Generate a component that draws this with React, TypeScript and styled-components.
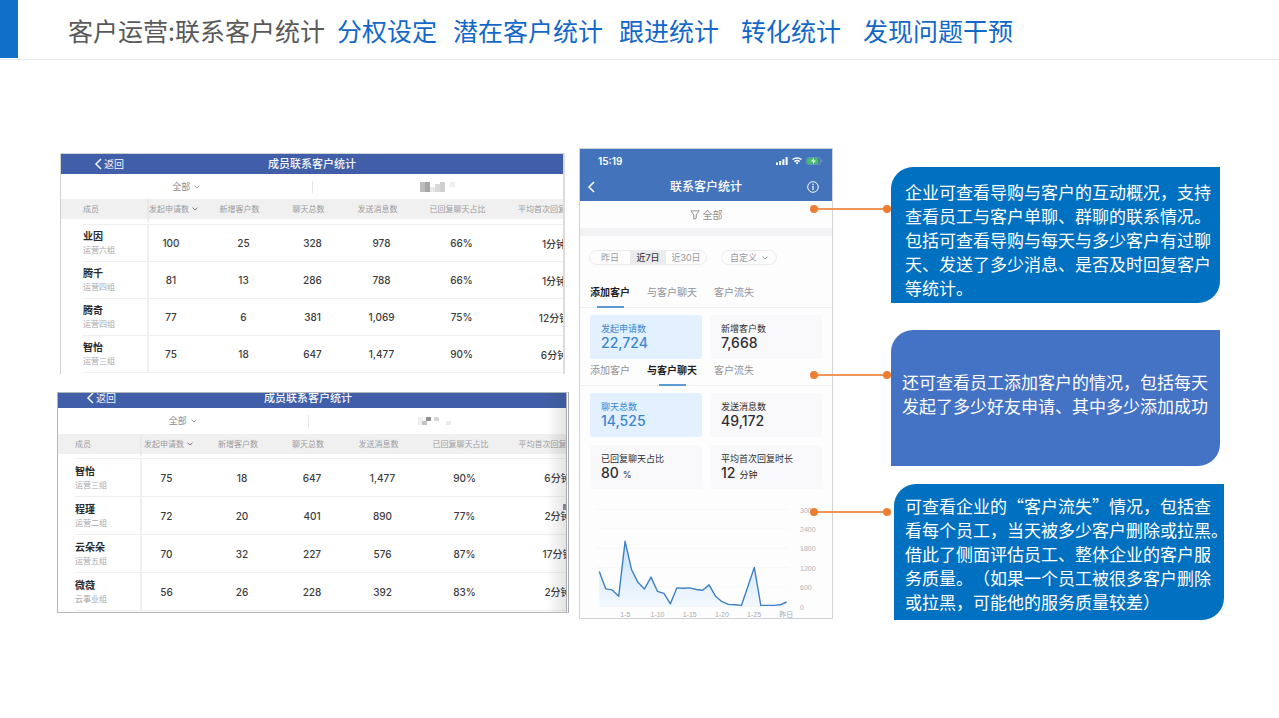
import React from "react";
import styled, { createGlobalStyle } from "styled-components";

const CJK = `"Noto Sans CJK SC", sans-serif`;

const GlobalStyle = createGlobalStyle`
  * { box-sizing: border-box; }
  body {
    margin: 0;
    background: #fff;
    font-family: Inter, ${CJK};
    text-spacing-trim: space-all;
  }
  h1, h2, p, ul { margin: 0; padding: 0; }
  button, select {
    margin: 0;
    padding: 0;
    border: 0;
    background: none;
    color: inherit;
    font: inherit;
    white-space: nowrap;
    appearance: none;
    cursor: pointer;
  }
  svg { display: block; flex: none; }
`;

/* ---------- page header ---------- */

const Header = styled.header`
  display: flex;
  height: 60px;
  border-bottom: 1px solid #e9e9e9;
`;

const Accent = styled.div`
  width: 18px;
  height: 58px;
  background: #1070c9;
`;

const Heading = styled.h1`
  display: flex;
  align-items: center;
  padding-left: 50px;
  height: 59px;
  color: #595959;
  font: 400 25px/36px ${CJK};
  white-space: nowrap;
`;

const Topic = styled.span<{ $gap: number }>`
  margin-left: ${(p) => p.$gap}px;
  color: #1268c8;
`;

const Main = styled.main`
  display: grid;
  grid-template-columns: minmax(0, 512fr) minmax(0, 264fr) minmax(0, 391fr);
  align-items: start;
  padding: 88px 55px 40px 57px;
`;

/* ---------- member tables ---------- */

const Tables = styled.div`
  display: flex;
  flex-direction: column;
  gap: 18px;
  padding-top: 5px;
`;

const Panel = styled.section<{ $framed?: boolean }>`
  position: relative;
  overflow: hidden;
  padding-bottom: 1px;
  border: 1px solid ${(p) => (p.$framed ? "#b5b7bb" : "#cfd1d6")};
  background: #fff;
  ${(p) =>
    p.$framed
      ? "border-right: 3px double #a9acb3;"
      : "margin: 0 4px 0 3px; border-right: 2px solid #dcdcdc; border-bottom: 0;"}
`;

const EdgeShade = styled.div`
  position: absolute;
  inset: 0 0 0 auto;
  width: 20px;
  background: linear-gradient(to right, rgba(60, 60, 70, 0), rgba(60, 60, 70, 0.14));
`;

const Handle = styled.div`
  position: absolute;
  top: 111px;
  right: 0;
  width: 3px;
  height: 6px;
  background: #81858f;
`;

const Bar = styled.div<{ $height: number; $inset: number }>`
  display: grid;
  grid-template-columns: 1fr auto 1fr;
  align-content: end;
  height: ${(p) => p.$height}px;
  padding-right: ${(p) => p.$inset}px;
  background: #405fa8;
  color: #f3f6fc;
`;

const Back = styled.button<{ $start: number }>`
  display: flex;
  align-items: center;
  gap: 2px;
  height: 20px;
  padding-left: ${(p) => p.$start}px;
  font-size: 10px;
  line-height: 20px;
`;

const BarTitle = styled.h2`
  font-size: 11px;
  font-weight: 500;
  line-height: 20px;
`;

const Filters = styled.div<{ $height: number; $inset: number }>`
  display: flex;
  align-items: center;
  height: ${(p) => p.$height}px;
  padding-right: ${(p) => p.$inset}px;
`;

const FilterHalf = styled.div`
  flex: 1;
  display: flex;
  justify-content: center;
  color: #8d8d8d;
  & + & { border-left: 1px solid #e4e4e4; height: 12px; align-items: center; }
`;

const Picker = styled.label`
  display: flex;
  align-items: center;
  gap: 3px;
  select { font-size: 9px; line-height: 14px; }
`;

const Grid = styled.table`
  table-layout: fixed;
  width: 540px;
  border-spacing: 0;
`;

const HeadCell = styled.th<{ $gap: number; $start?: number; $divider?: boolean }>`
  height: ${(p) => 20 + p.$gap}px;
  padding: 0 ${(p) => (p.$start === undefined ? 8 : 0)}px 0 ${(p) => p.$start ?? 0}px;
  border-bottom: ${(p) => p.$gap}px solid #fff;
  background: #f0f0f0;
  background-clip: padding-box;
  color: #9b9ba0;
  font-size: 8px;
  font-weight: 400;
  line-height: 12px;
  text-align: ${(p) => (p.$start === undefined ? "center" : "left")};
  white-space: nowrap;
  ${(p) => p.$divider && "border-right: 2px solid #e8e8e8;"}
`;

const Sort = styled.button`
  display: flex;
  align-items: center;
  gap: 3px;
`;

const Cell = styled.td<{ $before: number; $after: number; $first: boolean }>`
  padding: 0 ${(p) => p.$after}px 0 ${(p) => p.$before}px;
  border-top: ${(p) => (p.$first ? "1px solid #efeff1" : "0")};
  border-bottom: 1px solid #efeff1;
  color: #3c3c3e;
  font-size: 10px;
  font-weight: 500;
  text-align: center;
  white-space: nowrap;
`;

const MemberCell = styled.td<{ $start: number }>`
  padding: 0 0 0 ${(p) => p.$start}px;
  border-right: 2px solid #f0f0f1;
`;

const Member = styled.div<{ $height: number; $first: boolean }>`
  display: flex;
  flex-direction: column;
  justify-content: center;
  height: ${(p) => p.$height + (p.$first ? 1 : 0)}px;
  border-top: ${(p) => (p.$first ? "1px solid #efeff1" : "0")};
  border-bottom: 1px solid #efeff1;
  strong { color: #2b2b2d; font-size: 10px; font-weight: 700; line-height: 14px; }
  span { color: #a9a9ae; font-size: 8px; line-height: 14px; }
`;

type Row = [string, string, string, string, string, string, string, string];

const Chevron = ({ color = "#9a9a9a" }: { color?: string }) => (
  <svg width="6" height="4" viewBox="0 0 6 4" fill="none" stroke={color}>
    <path d="M.5.7 3 3 5.5.7" />
  </svg>
);

const BackArrow = () => (
  <svg width="8" height="12" viewBox="0 0 8 12" fill="none" stroke="currentColor" strokeWidth="1.5">
    <path d="M7 1 2 6l5 5" />
  </svg>
);

type Tile = [number, number, number, string];

const Mosaic = ({ tiles }: { tiles: Tile[] }) => (
  <svg width="36" height="10" viewBox="0 0 36 10" aria-hidden="true">
    {tiles.map(([x, y, size, fill], i) => (
      <rect key={i} x={x} y={y} width="5" height={size} fill={fill} />
    ))}
  </svg>
);

interface MemberPanelProps {
  framed?: boolean;
  rows: Row[];
  columns: number[];
  tiles: Tile[];
}

function MemberPanel({ framed, rows, columns, tiles }: MemberPanelProps) {
  const gap = framed ? 4 : 5;
  const inset = framed ? 8 : 0;
  const heads = ["新增客户数", "聊天总数", "发送消息数", "已回复聊天占比", "平均首次回复时长"];
  return (
    <Panel $framed={framed}>
      <Bar $height={framed ? 15 : 20} $inset={inset}>
        <Back $start={framed ? 28 : 33}>
          <BackArrow />
          返回
        </Back>
        <BarTitle>成员联系客户统计</BarTitle>
      </Bar>
      <Filters $height={framed ? 26 : 25} $inset={inset}>
        <FilterHalf>
          <Picker>
            <select aria-label="成员范围">
              <option>全部</option>
            </select>
            <Chevron />
          </Picker>
        </FilterHalf>
        <FilterHalf>
          <Mosaic tiles={tiles} />
        </FilterHalf>
      </Filters>
      <Grid>
        <colgroup>
          {columns.map((w, i) => (
            <col key={i} width={w} />
          ))}
        </colgroup>
        <thead>
          <tr>
            <HeadCell $gap={gap} $start={framed ? 17 : 22} $divider>成员</HeadCell>
            <HeadCell $gap={gap} $start={framed ? 2 : 0}>
              <Sort>
                发起申请数
                <Chevron color="#77777c" />
              </Sort>
            </HeadCell>
            {heads.map((h) => (
              <HeadCell key={h} $gap={gap}>{h}</HeadCell>
            ))}
          </tr>
        </thead>
        <tbody>
          {rows.map(([name, team, ...values], r) => (
            <tr key={name}>
              <MemberCell $start={framed ? 17 : 22}>
                <Member $height={framed ? 38 : 37} $first={r === 0}>
                  <strong>{name}</strong>
                  <span>{team}</span>
                </Member>
              </MemberCell>
              {values.map((v, i) => (
                <Cell
                  key={i}
                  $first={r === 0}
                  $after={i === 0 ? 16 : 0}
                  $before={framed && i === 5 ? 6 : 0}
                >
                  {v}
                </Cell>
              ))}
            </tr>
          ))}
        </tbody>
      </Grid>
      {framed && <EdgeShade />}
      {framed && <Handle />}
    </Panel>
  );
}

/* ---------- phone ---------- */

const Phone = styled.section`
  margin-left: 10px;
  border: 1px solid #d3d3d6;
  background: #fefdfe;
`;

const PhoneTop = styled.div`
  background: #4374bb;
  color: #fff;
`;

const Status = styled.div`
  display: flex;
  align-items: center;
  gap: 4px;
  height: 24px;
  padding: 0 9px 0 18px;
  font-size: 10px;
  font-weight: 600;
  time { margin-right: auto; }
`;

const Nav = styled.div`
  display: grid;
  grid-template-columns: 1fr auto 1fr;
  align-items: center;
  height: 28px;
  h2 { font-size: 12px; font-weight: 500; line-height: 18px; }
`;

const NavButton = styled.button<{ $end?: boolean }>`
  justify-self: ${(p) => (p.$end ? "end" : "start")};
  padding: ${(p) => (p.$end ? "0 13px 0 0" : "0 0 0 7px")};
`;

const ScopeButton = styled.button`
  display: flex;
  align-items: center;
  justify-content: center;
  gap: 3px;
  width: 100%;
  height: 27px;
  color: #8f8f93;
  font-size: 10px;
`;

const Band = styled.div`
  height: 8px;
  background: #f3f2f5;
`;

const Ranges = styled.div`
  display: flex;
  gap: 14px;
  padding: 14px 9px 0;
`;

const Pill = styled.div`
  display: flex;
  align-items: center;
  height: 15px;
  border: 1px solid #ebebed;
  border-radius: 8px;
  overflow: hidden;
  color: #98989d;
  font-size: 9px;
  line-height: 13px;
`;

const Range = styled.button<{ $active?: boolean }>`
  flex: none;
  width: 40px;
  height: 13px;
  ${(p) => p.$active && "width: 36px; background: #ebebed; color: #3a3a48; font-weight: 500;"}
`;

const CustomRange = styled(Picker)`
  padding: 0 8px;
  gap: 4px;
`;

const Tabs = styled.div<{ $top: number }>`
  display: flex;
  gap: 17px;
  margin-top: ${(p) => p.$top}px;
  padding: 0 10px;
  box-shadow: inset 0 -1px #f0f0f2;
`;

const Tab = styled.button<{ $active: boolean }>`
  height: 23px;
  color: ${(p) => (p.$active ? "#1f1f22" : "#939398")};
  font-size: 10px;
  font-weight: ${(p) => (p.$active ? 700 : 400)};
  line-height: 14px;
  &::after {
    content: "";
    display: block;
    width: 27px;
    height: 2px;
    margin: 7px auto 0;
    background: ${(p) => (p.$active ? "#5b9ad3" : "transparent")};
  }
`;

const Cards = styled.div`
  display: grid;
  grid-template-columns: 1fr 1fr;
  gap: 8px;
  padding: 7px 10px 0;
`;

const Card = styled.div<{ $active?: boolean }>`
  height: 44px;
  padding: 8px 11px;
  border-radius: 2px;
  background: ${(p) => (p.$active ? "#e3f0ff" : "#f9f8fb")};
  color: ${(p) => (p.$active ? "#3a86d2" : "#2e2e31")};
`;

const CardLabel = styled.p`
  font-size: 9px;
  line-height: 12px;
  white-space: nowrap;
`;

const CardValue = styled.p`
  font-size: 14px;
  font-weight: 500;
  line-height: 16px;
  small { margin-left: 4px; font-size: 9px; font-weight: 400; }
`;

const ChartArt = styled.svg`
  width: 100%;
  height: auto;
  font-family: "Liberation Sans", ${CJK};
`;

const TAB_NAMES = ["添加客户", "与客户聊天", "客户流失"];

function TabRow({ active, top }: { active: number; top: number }) {
  return (
    <Tabs $top={top} role="tablist">
      {TAB_NAMES.map((t, i) => (
        <Tab key={t} role="tab" aria-selected={i === active} $active={i === active}>
          {t}
        </Tab>
      ))}
    </Tabs>
  );
}

const SERIES = [
  1090, 550, 520, 320, 2020, 1140, 745, 550, 915, 475, 415, 90, 580, 570, 580, 530, 510, 675, 320,
  155, 70, 60, 40, 620, 1215, 40, 40, 40, 60, 145,
];

function Chart() {
  const points = SERIES.map((v, i) => `${(19.3 + i * 6.46).toFixed(1)},${(117.7 - v / 30.9).toFixed(1)}`);
  const ticks = [3000, 2400, 1800, 1200, 600, 0];
  const days = ["1-5", "1-10", "1-15", "1-20", "1-25", "昨日"];
  return (
    <ChartArt viewBox="0 0 252 129" role="img" aria-label="聊天总数趋势">
      <defs>
        <linearGradient id="area" x1="0" y1="0" x2="0" y2="1">
          <stop offset="0" stopColor="#c9e2fa" />
          <stop offset="1" stopColor="#f2f8fe" />
        </linearGradient>
      </defs>
      {ticks.map((t, i) => (
        <g key={t}>
          <path d={`M16.5 ${20.5 + i * 19.4}H208.5`} stroke="#f7f7f9" />
          <text x="220" y={23.5 + i * 19.4} fontSize="7" fill="#b0b0b4">
            {t}
          </text>
        </g>
      ))}
      <polygon points={`19.3,117.7 ${points.join(" ")} 206.6,117.7`} fill="url(#area)" />
      <polyline points={points.join(" ")} fill="none" stroke="#3c80c8" strokeWidth="1.4" strokeLinejoin="round" />
      {days.map((d, i) => (
        <text key={d} x={45.3 + i * 32.2} y="128" fontSize="7" fill="#a9a9ad" textAnchor="middle">
          {d}
        </text>
      ))}
    </ChartArt>
  );
}

function PhonePanel() {
  return (
    <Phone>
      <PhoneTop>
        <Status>
          <time>15:19</time>
          <svg width="12" height="8" viewBox="0 0 12 8" fill="#fff">
            <path d="M0 5.5h2V8H0zM3.2 4h2v4h-2zM6.4 2.2h2V8h-2zM9.6 0h2v8h-2z" />
          </svg>
          <svg width="10" height="8" viewBox="0 0 10 8" fill="none" stroke="#fff" strokeWidth="1.4">
            <path d="M.6 2.6C3 .4 7 .4 9.4 2.6M2.3 4.6c1.5-1.3 3.9-1.3 5.4 0" />
            <path d="M3.6 5.8a2 2 0 0 1 2.8 0L5 7.4z" fill="#fff" stroke="none" />
          </svg>
          <svg width="17" height="8" viewBox="0 0 17 8">
            <rect x=".5" y=".5" width="14" height="7" rx="2" fill="none" stroke="#6c95bd" />
            <rect x="1.3" y="1.3" width="11" height="5.4" rx="1.2" fill="#43c463" />
            <path d="M8 .8 5 4.4h2.2L6.8 7.2l3-3.6H7.6z" fill="#fff" />
            <path d="M15.6 2.8v2.4c1-.3 1-2.1 0-2.4z" fill="#86a9c9" />
          </svg>
        </Status>
        <Nav>
          <NavButton aria-label="返回"><BackArrow /></NavButton>
          <h2>联系客户统计</h2>
          <NavButton $end aria-label="说明">
            <svg width="12" height="12" viewBox="0 0 12 12" fill="none" stroke="#fff">
              <circle cx="6" cy="6" r="5.3" />
              <path d="M6 2.8v1.4M6 5v4" strokeWidth="1.2" />
            </svg>
          </NavButton>
        </Nav>
      </PhoneTop>
      <ScopeButton>
        <svg width="10" height="10" viewBox="0 0 10 10" fill="none" stroke="#949498">
          <path d="M.8.8h8.4L6.2 5v3.2L3.8 9.3V5z" />
        </svg>
        全部
      </ScopeButton>
      <Band />
      <Ranges>
        <Pill>
          <Range>昨日</Range>
          <Range $active>近7日</Range>
          <Range>近30日</Range>
        </Pill>
        <Pill>
          <CustomRange>
            <select aria-label="日期范围">
              <option>自定义</option>
            </select>
            <Chevron />
          </CustomRange>
        </Pill>
      </Ranges>
      <TabRow active={0} top={20} />
      <Cards>
        <Card $active>
          <CardLabel>发起申请数</CardLabel>
          <CardValue>22,724</CardValue>
        </Card>
        <Card>
          <CardLabel>新增客户数</CardLabel>
          <CardValue>7,668</CardValue>
        </Card>
      </Cards>
      <TabRow active={1} top={4} />
      <Cards>
        <Card $active>
          <CardLabel>聊天总数</CardLabel>
          <CardValue>14,525</CardValue>
        </Card>
        <Card>
          <CardLabel>发送消息数</CardLabel>
          <CardValue>49,172</CardValue>
        </Card>
        <Card>
          <CardLabel>已回复聊天占比</CardLabel>
          <CardValue>80<small>%</small></CardValue>
        </Card>
        <Card>
          <CardLabel>平均首次回复时长</CardLabel>
          <CardValue>12<small>分钟</small></CardValue>
        </Card>
      </Cards>
      <Chart />
    </Phone>
  );
}

/* ---------- callouts ---------- */

const Callouts = styled.ul`
  margin-left: 58px;
  padding-top: 19px;
  list-style: none;
`;

const Callout = styled.li<{ $tone: string; $top: number; $pad: string; $shift?: boolean }>`
  position: relative;
  min-height: 136px;
  margin: ${(p) => p.$top}px ${(p) => (p.$shift ? 0 : 4)}px 0 ${(p) => (p.$shift ? 3 : 0)}px;
  padding: ${(p) => p.$pad};
  border-radius: 22px 0 22px 0;
  background: ${(p) => p.$tone};
  color: #fff;
  font: 400 17px/24px ${CJK};
  white-space: pre;
`;

const Connector = styled.svg<{ $x: number; $y: number }>`
  position: absolute;
  left: ${(p) => -p.$x}px;
  top: ${(p) => p.$y}px;
`;

const Link = ({ x, y }: { x: number; y: number }) => (
  <Connector $x={x} $y={y} width="81" height="8" viewBox="0 0 81 8" fill="#ed7d31" aria-hidden="true">
    <path d="M4 4h73" stroke="#f0955a" strokeWidth="2" />
    <circle cx="4" cy="4" r="4" />
    <circle cx="77" cy="4" r="4" />
  </Connector>
);

/* ---------- data ---------- */

const FIRST: Row[] = [
  ["业因", "运营六组", "100", "25", "328", "978", "66%", "1分钟"],
  ["腾千", "运营四组", "81", "13", "286", "788", "66%", "1分钟"],
  ["腾奇", "运营四组", "77", "6", "381", "1,069", "75%", "12分钟"],
  ["智怡", "运营三组", "75", "18", "647", "1,477", "90%", "6分钟"],
];

const SECOND: Row[] = [
  ["智怡", "运营三组", "75", "18", "647", "1,477", "90%", "6分钟"],
  ["程瑾", "运营二组", "72", "20", "401", "890", "77%", "2分钟"],
  ["云朵朵", "运营五组", "70", "32", "227", "576", "87%", "17分钟"],
  ["微薇", "云事业组", "56", "26", "228", "392", "83%", "2分钟"],
];

export default function App() {
  return (
    <div lang="zh-CN">
      <GlobalStyle />
      <Header>
        <Accent />
        <Heading>
          客户运营:联系客户统计
          <Topic $gap={12}>分权设定</Topic>
          <Topic $gap={16}>潜在客户统计</Topic>
          <Topic $gap={16}>跟进统计</Topic>
          <Topic $gap={22}>转化统计</Topic>
          <Topic $gap={22}>发现问题干预</Topic>
        </Heading>
      </Header>
      <Main>
        <Tables>
          <MemberPanel
            rows={FIRST}
            columns={[88, 60, 69, 69, 69, 91, 94]}
            tiles={[
              [0, 0, 10, "#bdbdbd"],
              [5, 0, 10, "#a6a6a6"],
              [10, 5, 5, "#e9e9e9"],
              [15, 2, 8, "#d9d9d9"],
              [20, 0, 10, "#cfcfcf"],
              [30, 0, 5, "#efefef"],
            ]}
          />
          <MemberPanel
            framed
            rows={SECOND}
            columns={[84, 65, 70, 70, 71, 93, 87]}
            tiles={[
              [3, 1, 8, "#efefef"],
              [7, 5, 4, "#c4c4c4"],
              [11, 1, 4, "#8f8f94"],
              [19, 1, 4, "#d8d8d8"],
              [31, 5, 4, "#ececec"],
            ]}
          />
        </Tables>
        <PhonePanel />
        <Callouts>
          <Callout $tone="#0070c0" $top={0} $pad="13px 0 0 14px">
            <Link x={81} y={38} />
            {"企业可查看导购与客户的互动概况，支持\n查看员工与客户单聊、群聊的联系情况。\n包括可查看导购与每天与多少客户有过聊\n天、发送了多少消息、是否及时回复客户\n等统计。"}
          </Callout>
          <Callout $tone="#4472c4" $top={27} $pad="40px 0 0 11px">
            <Link x={81} y={41} />
            {"还可查看员工添加客户的情况，包括每天\n发起了多少好友申请、其中多少添加成功"}
          </Callout>
          <Callout $tone="#0070c0" $top={18} $pad="10px 0 0 11px" $shift>
            <Link x={84} y={24} />
            {"可查看企业的“客户流失”情况，包括查\n看每个员工，当天被多少客户删除或拉黑。\n借此了侧面评估员工、整体企业的客户服\n务质量。（如果一个员工被很多客户删除\n或拉黑，可能他的服务质量较差）"}
          </Callout>
        </Callouts>
      </Main>
    </div>
  );
}
